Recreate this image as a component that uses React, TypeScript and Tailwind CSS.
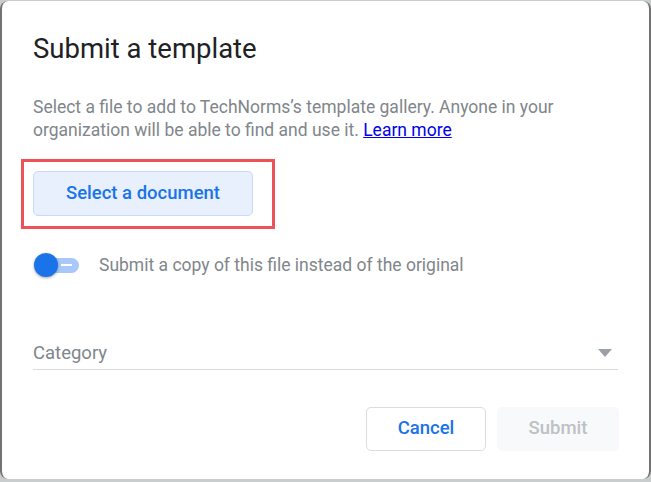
export default function App() {
  return (
    <div className="w-[651px] h-[482px] bg-[#c9cdcd] pt-px pb-[3px] font-['Roboto',sans-serif]">
      <div className="h-full bg-white rounded-[8px] border-x-2 border-[#737373] flex flex-col">
        {/* Title */}
        <h1 className="pl-[31px] pt-[30px] text-[27.5px] leading-[36px] text-[#202124]">
          Submit a template
        </h1>

        {/* Description */}
        <p className="pl-[31px] pr-[40px] mt-[29px] text-[17.5px] leading-[23px] text-[#80868b]">
          Select a file to add to TechNorms’s template gallery. Anyone in your organization will be able to find and use it.{" "}
          <a href="#" className="text-[#0000ee] underline">
            Learn more
          </a>
        </p>

        {/* Select a document (highlighted) */}
        <div className="ml-[19px] mt-[17px] w-[254px] h-[70px] border-[3px] border-[#ef5159] pl-[9px] pt-[9px]">
          <button className="w-[220px] h-[45px] rounded-[5px] bg-[#e8f0fe] border border-[#c6dafc] text-[#1a73e8] text-[18.5px] font-medium">
            Select a document
          </button>
        </div>

        {/* Toggle */}
        <div className="flex items-center pl-[31px] mt-[23px] h-[26px]">
          <div className="relative w-[48px] h-[26px]">
            <div className="absolute left-[8px] top-[6px] w-[38px] h-[15px] rounded-full bg-[#a8c7fa]">
              <div className="absolute left-[20px] top-[6px] w-[11px] h-[2px] bg-white" />
            </div>
            <div className="absolute left-[1px] top-[1px] w-[24px] h-[24px] rounded-full bg-[#1a73e8] shadow-[0_1px_3px_rgba(0,0,0,0.35)]" />
          </div>
          <span className="ml-[18px] text-[17.5px] text-[#80868b]">
            Submit a copy of this file instead of the original
          </span>
        </div>

        {/* Category select */}
        <div className="mx-[31px] mt-[63px] flex items-center justify-between border-b border-[#dadce0] pb-[4px]">
          <span className="text-[18.5px] leading-[24px] text-[#80868b]">Category</span>
          <svg width="14" height="8" viewBox="0 0 14 8" className="mr-[6px]">
            <path d="M0 0h14L7 8z" fill="#9aa0a6" />
          </svg>
        </div>

        {/* Actions */}
        <div className="flex justify-end gap-[11px] pr-[30px] mt-[37px]">
          <button className="w-[120px] h-[44px] rounded-[5px] border border-[#dadce0] text-[#1a73e8] text-[18.5px] font-medium">
            Cancel
          </button>
          <button className="w-[122px] h-[44px] rounded-[5px] bg-[#f8f9fa] text-[#bdc1c6] text-[18.5px] font-medium">
            Submit
          </button>
        </div>
      </div>
    </div>
  );
}
